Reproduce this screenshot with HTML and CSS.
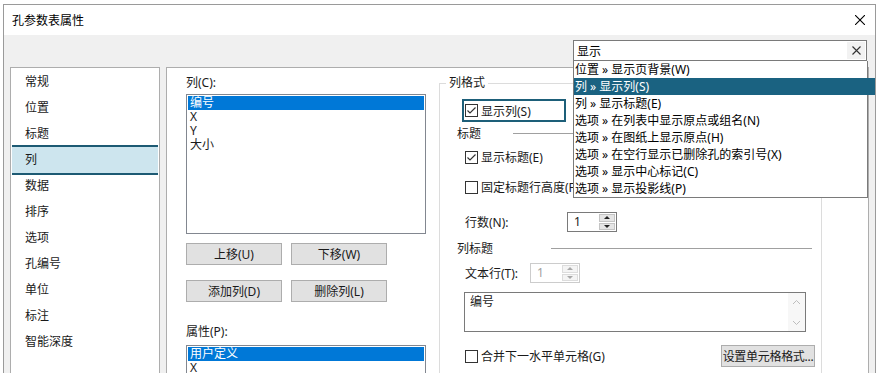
FILE: index.html
```html
<!DOCTYPE html>
<html lang="zh-CN">
<head>
  <meta charset="UTF-8">
  <title>孔参数表属性</title>
  <link rel="stylesheet" href="styles.css">
</head>
<body>

  <div class="window">
    <div class="titlebar">
      <span class="title">孔参数表属性</span>
      <svg class="close" width="10" height="10" viewBox="0 0 10 10"><path d="M0 0L10 10M10 0L0 10" stroke="#000" stroke-width="1.1"/></svg>
    </div>

    <div class="dialog">
      <ul class="nav">
        <li>常规</li>
        <li>位置</li>
        <li>标题</li>
        <li class="active">列</li>
        <li>数据</li>
        <li>排序</li>
        <li>选项</li>
        <li>孔编号</li>
        <li>单位</li>
        <li>标注</li>
        <li>智能深度</li>
      </ul>

      <div class="page">
        <div class="col-left">
          <div class="label">列(C):</div>
          <ul class="listbox columns">
            <li class="sel">编号</li>
            <li>X</li>
            <li>Y</li>
            <li>大小</li>
          </ul>
          <div class="btn-row">
            <button class="btn">上移(U)</button>
            <button class="btn">下移(W)</button>
          </div>
          <div class="btn-row second">
            <button class="btn">添加列(D)</button>
            <button class="btn">删除列(L)</button>
          </div>
          <div class="label props-label">属性(P):</div>
          <ul class="listbox props">
            <li class="sel">用户定义</li>
            <li>X</li>
          </ul>
        </div>

        <fieldset class="group">
          <legend>列格式</legend>
          <div class="group-body">
            <div class="focus-box">
              <label class="check">
                <svg class="box" width="13" height="13" viewBox="0 0 13 13"><rect x="0.5" y="0.5" width="12" height="12" fill="#fff" stroke="#333"/><path d="M2.5 6.5L5 9L10.5 3.5" fill="none" stroke="#333" stroke-width="1.2"/></svg>
                <span>显示列(S)</span>
              </label>
            </div>

            <div class="sep first-sep">
              <span class="sep-text title-sep">标题</span>
              <span class="sep-line"></span>
            </div>

            <label class="check row-check show-title">
              <svg class="box" width="13" height="13" viewBox="0 0 13 13"><rect x="0.5" y="0.5" width="12" height="12" fill="#fff" stroke="#333"/><path d="M2.5 6.5L5 9L10.5 3.5" fill="none" stroke="#333" stroke-width="1.2"/></svg>
              <span>显示标题(E)</span>
            </label>

            <label class="check row-check fixed-height">
              <svg class="box" width="13" height="13" viewBox="0 0 13 13"><rect x="0.5" y="0.5" width="12" height="12" fill="#fff" stroke="#333"/></svg>
              <span>固定标题行高度(F)</span>
            </label>

            <div class="field rows-field">
              <span class="field-label wide">行数(N):</span>
              <div class="spin">
                <span class="spin-val">1</span>
                <span class="spin-btns">
                  <span class="spin-up"><i class="tri-up"></i></span>
                  <span class="spin-down"><i class="tri-down"></i></span>
                </span>
              </div>
            </div>

            <div class="sep second-sep">
              <span class="sep-text head-sep">列标题</span>
              <span class="sep-line"></span>
            </div>

            <div class="field text-field">
              <span class="field-label">文本行(T):</span>
              <div class="spin disabled">
                <span class="spin-val">1</span>
                <span class="spin-btns">
                  <span class="spin-up"><i class="tri-up"></i></span>
                  <span class="spin-down"><i class="tri-down"></i></span>
                </span>
              </div>
            </div>

            <div class="memo">
              <span class="memo-text">编号</span>
              <span class="memo-scroll">
                <svg width="9" height="6" viewBox="0 0 9 6"><path d="M1 5L4.5 1.5L8 5" fill="none" stroke="#bdbdbd"/></svg>
                <svg width="9" height="6" viewBox="0 0 9 6"><path d="M1 1L4.5 4.5L8 1" fill="none" stroke="#bdbdbd"/></svg>
              </span>
            </div>

            <div class="bottom-row">
              <label class="check">
                <svg class="box" width="13" height="13" viewBox="0 0 13 13"><rect x="0.5" y="0.5" width="12" height="12" fill="#fff" stroke="#333"/></svg>
                <span>合并下一水平单元格(G)</span>
              </label>
              <button class="btn cell-btn">设置单元格格式...</button>
            </div>
          </div>
        </fieldset>
      </div>
    </div>

    <!-- search popup over the dialog -->
    <div class="finder">
      <div class="search">
        <span class="search-text">显示</span>
        <span class="clear"><svg width="9" height="9" viewBox="0 0 9 9"><path d="M0.5 0.5L8.5 8.5M8.5 0.5L0.5 8.5" stroke="#333" stroke-width="1.1"/></svg></span>
      </div>
      <ul class="results">
        <li>位置 » 显示页背景(W)</li>
        <li class="sel">列 » 显示列(S)</li>
        <li>列 » 显示标题(E)</li>
        <li>选项 » 在列表中显示原点或组名(N)</li>
        <li>选项 » 在图纸上显示原点(H)</li>
        <li>选项 » 在空行显示已删除孔的索引号(X)</li>
        <li>选项 » 显示中心标记(C)</li>
        <li>选项 » 显示投影线(P)</li>
      </ul>
    </div>
  </div>

</body>
</html>
```

FILE: styles.css
```css
html, body {
  margin: 0;
  padding: 0;
  background: #fff;
  overflow: hidden;
}

body {
  font-family: 'Noto Sans', 'Noto Sans CJK SC', sans-serif;
  font-size: 12px;
  color: #1a1a1a;
}

ul {
  list-style: none;
  margin: 0;
  padding: 0;
}

.window {
  position: relative;
  margin: 4px 0 0 3px;
  width: 873px;
  height: 369px;
  box-sizing: border-box;
  border: 1px solid #9a9a9a;
  border-bottom: none;
  background: #f0f0f0;
  overflow: hidden;
}

.titlebar {
  height: 30px;
  background: #fff;
  display: flex;
  align-items: center;
  justify-content: space-between;
  padding: 0 10px 0 8px;
}

.title {
  font-size: 12px;
  color: #000;
}

.dialog {
  display: flex;
  gap: 6px;
  padding: 32px 6px 0 6px;
}

/* left navigation */
.nav {
  width: 150px;
  height: 330px;
  box-sizing: border-box;
  background: #fff;
  border: 1px solid #adadad;
  padding: 1px;
  flex-shrink: 0;
}

.nav li {
  height: 26px;
  line-height: 26px;
  padding-left: 13px;
}

.nav li.active {
  background: #cde5ee;
  border-top: 2px solid #1d5a73;
  border-bottom: 2px solid #1d5a73;
  margin: -2px 0;
}

.page {
  flex: 1;
  display: flex;
  gap: 13px;
  height: 330px;
  box-sizing: border-box;
  background: #fff;
  border: 1px solid #adadad;
  padding: 7px 0 0 19px;
}

.col-left {
  width: 240px;
  flex-shrink: 0;
}

.label {
  line-height: 16px;
  height: 16px;
}

.listbox {
  margin-top: 3px;
  border: 1px solid #828790;
  padding: 1px;
  background: #fff;
}

.listbox li {
  height: 14px;
  line-height: 14px;
  padding-left: 2px;
}

.listbox li.sel {
  background: #0078d7;
  color: #fff;
}

.columns {
  height: 140px;
  box-sizing: border-box;
}

.props {
  height: 60px;
  margin-top: 5px;
}

.props-label {
  margin-top: 22px;
}

.btn-row {
  display: flex;
  gap: 9px;
  margin-top: 9px;
}

.btn-row.second {
  margin-top: 15px;
}

.btn {
  font: inherit;
  color: #1a1a1a;
  width: 96px;
  height: 22px;
  padding: 0;
  background: #e1e1e1;
  border: 1px solid #adadad;
  white-space: nowrap;
}

/* group box on the right */
.group {
  width: 383px;
  height: 330px;
  box-sizing: border-box;
  margin: 0;
  padding: 0;
  border: 1px solid #dcdcdc;
  min-width: 0;
}

.group legend {
  margin-left: 6px;
  padding: 0 3px;
  line-height: 16px;
}

.group-body {
  padding: 0 6px 0 17px;
}

.check {
  display: flex;
  align-items: center;
  gap: 3px;
}

.box {
  flex-shrink: 0;
}

.focus-box {
  margin: 8px 0 0 5px;
  width: 104px;
  height: 23px;
  box-sizing: border-box;
  border: 2px solid #1d5f79;
  padding-left: 1px;
  display: flex;
  align-items: center;
}

.sep {
  display: flex;
  align-items: center;
  height: 16px;
}

.first-sep {
  margin-top: 3px;
}

.second-sep {
  margin-top: 8px;
}

.title-sep {
  width: 56px;
}

.head-sep {
  width: 94px;
}

.sep-line {
  flex: 1;
  height: 1px;
  background: #a0a0a0;
  margin: 1px 3px 0 0;
}

.row-check {
  height: 18px;
  margin-left: 8px;
}

.show-title {
  margin-top: 7px;
}

.fixed-height {
  margin-top: 12px;
}

.field {
  display: flex;
  align-items: center;
  height: 20px;
  margin-left: 8px;
}

.rows-field {
  margin-top: 16px;
}

.text-field {
  margin-top: 7px;
}

.field-label {
  width: 65px;
}

.field-label.wide {
  width: 102px;
}

.spin {
  display: flex;
  width: 50px;
  height: 20px;
  box-sizing: border-box;
  border: 1px solid #7a7a7a;
  background: #fff;
}

.spin-val {
  flex: 1;
  padding-left: 6px;
  line-height: 18px;
}

.spin-btns {
  width: 16px;
  display: flex;
  flex-direction: column;
  gap: 1px;
  padding: 1px 1px 1px 0;
}

.spin-up, .spin-down {
  flex: 1;
  background: #e5e5e5;
  border: 1px solid #c4c4c4;
  display: flex;
  align-items: center;
  justify-content: center;
}

.tri-up {
  border-left: 3px solid transparent;
  border-right: 3px solid transparent;
  border-bottom: 3px solid #222;
}

.tri-down {
  border-left: 3px solid transparent;
  border-right: 3px solid transparent;
  border-top: 3px solid #222;
}

.spin.disabled {
  border-color: #cccccc;
  color: #a0a0a0;
}

.spin.disabled .spin-up, .spin.disabled .spin-down {
  background: #f4f4f4;
  border-color: #dcdcdc;
}

.spin.disabled .tri-up {
  border-bottom-color: #a8a8a8;
}

.spin.disabled .tri-down {
  border-top-color: #a8a8a8;
}

.memo {
  display: flex;
  margin: 9px 0 0 7px;
  width: 342px;
  height: 40px;
  box-sizing: border-box;
  border: 1px solid #7a7a7a;
  background: #fff;
}

.memo-text {
  flex: 1;
  padding: 1px 5px;
  line-height: 16px;
}

.memo-scroll {
  width: 17px;
  display: flex;
  flex-direction: column;
  align-items: center;
  justify-content: space-between;
  padding: 6px 0 5px;
  background: #f7f7f7;
}

.bottom-row {
  display: flex;
  align-items: center;
  justify-content: space-between;
  height: 22px;
  margin: 13px 0 0 8px;
}

.cell-btn {
  width: 94px;
  letter-spacing: -0.3px;
}

/* search popup */
.finder {
  position: absolute;
  left: 569px;
  top: 35px;
  width: 295px;
}

.search {
  display: flex;
  align-items: center;
  justify-content: space-between;
  width: 294px;
  height: 21px;
  box-sizing: border-box;
  border: 1px solid #7a7a7a;
  background: #fff;
  padding: 0 1px 0 3px;
  color: #000;
}

.clear {
  width: 18px;
  height: 17px;
  display: flex;
  align-items: center;
  justify-content: center;
  background: #f2f2f2;
}

.results {
  width: 295px;
  box-sizing: border-box;
  border: 1px solid #7a7a7a;
  border-top: none;
  background: #fff;
}

.results li {
  height: 17px;
  line-height: 17px;
  padding-left: 1px;
  color: #000;
  white-space: nowrap;
}

.results li.sel {
  background: #1a6281;
  color: #fff;
  margin-right: -10px;
}
```
